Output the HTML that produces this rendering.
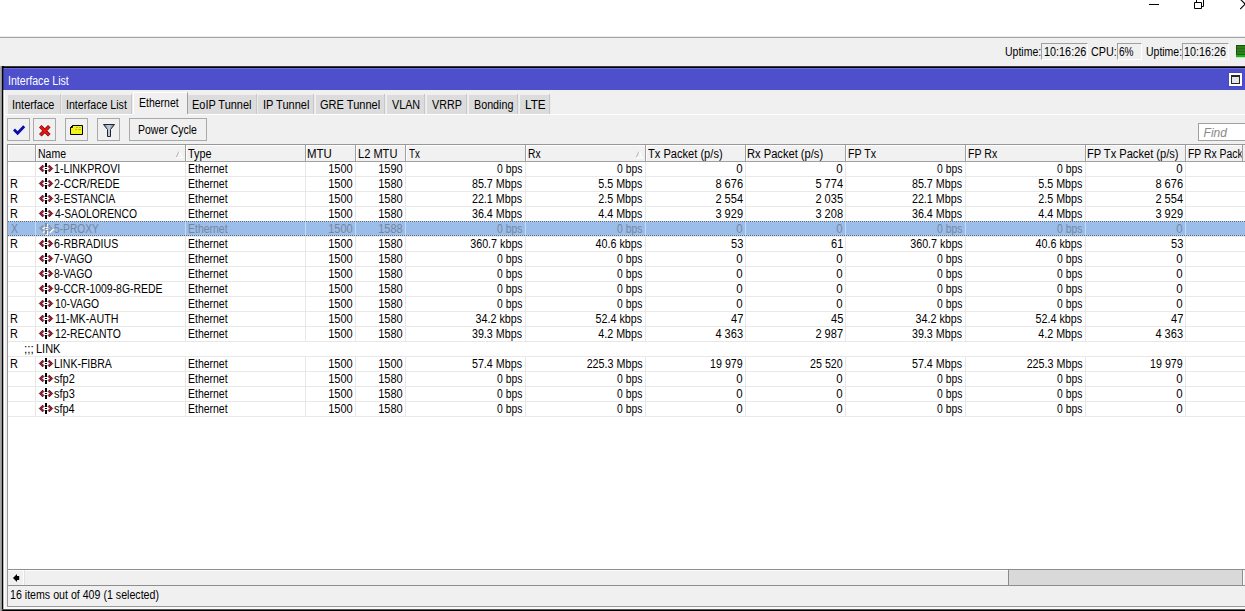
<!DOCTYPE html>
<html><head><meta charset="utf-8"><title>Interface List</title>
<style>
html,body{margin:0;padding:0;}
body{width:1245px;height:611px;overflow:hidden;background:#fff;position:relative;font-family:"Liberation Sans",sans-serif;font-size:12px;color:#000;}
#root{position:absolute;left:0;top:0;width:1245px;height:611px;overflow:hidden;}
#root div{position:absolute;}
.t{position:absolute;white-space:nowrap;line-height:14px;font-size:12px;}
svg{position:absolute;overflow:visible;}
</style></head>
<body><div id="root">
<div style="left:0px;top:0px;width:1245px;height:37px;background:#fff;"></div>
<div style="left:0px;top:36px;width:1245px;height:1px;background:#ececec;"></div>
<div style="left:0px;top:37px;width:1245px;height:1px;background:#a3a3a3;"></div>
<div style="left:0px;top:38px;width:1245px;height:28px;background:#f0f0f0;"></div>
<svg style="left:1140px;top:0" width="105" height="12" viewBox="1140 0 105 12"><path d="M1149 4.5H1159" stroke="#000" stroke-width="1" fill="none"/><path d="M1194.5 2.5h7v6h-7z M1196.5 2.5V-1 M1203.5 -1V6.5H1201.5" stroke="#000" stroke-width="1" fill="none"/><path d="M1240.6 -0.5L1246 4.9 M1240.2 9.1L1246 3.3" stroke="#000" stroke-width="1.1" fill="none"/></svg>
<span class="t" style="top:45.4px;transform:scaleX(0.8750);left:1004.78px;transform-origin:0 0;">Uptime:</span>
<div style="left:1041px;top:43px;width:47px;height:17px;background:#f0f0f0;box-sizing:border-box;border:1px solid;border-color:#a0a0a0 #fff #fff #a0a0a0;"></div>
<span class="t" style="top:45.4px;transform:scaleX(0.9039);left:1043.55px;transform-origin:0 0;">10:16:26</span>
<span class="t" style="top:45.4px;transform:scaleX(0.8984);left:1091.04px;transform-origin:0 0;">CPU:</span>
<div style="left:1117px;top:43px;width:25px;height:17px;background:#f0f0f0;box-sizing:border-box;border:1px solid;border-color:#a0a0a0 #fff #fff #a0a0a0;"></div>
<span class="t" style="top:45.4px;transform:scaleX(0.8398);left:1118.78px;transform-origin:0 0;">6%</span>
<span class="t" style="top:45.4px;transform:scaleX(0.8725);left:1145.88px;transform-origin:0 0;">Uptime:</span>
<div style="left:1182px;top:43px;width:47px;height:17px;background:#f0f0f0;box-sizing:border-box;border:1px solid;border-color:#a0a0a0 #fff #fff #a0a0a0;"></div>
<span class="t" style="top:45.4px;transform:scaleX(0.9017);left:1184.05px;transform-origin:0 0;">10:16:26</span>
<div style="left:1236px;top:45px;width:9px;height:12px;background:#2f7d1c;"></div>
<div style="left:1236px;top:45px;width:9px;height:1px;background:#1c4c10;"></div>
<div style="left:1236px;top:45px;width:1px;height:10px;background:#1c5010;"></div>
<div style="left:1237px;top:48px;width:8px;height:1px;background:#286c17;"></div>
<div style="left:1237px;top:51px;width:8px;height:1px;background:#286c17;"></div>
<div style="left:1236px;top:54px;width:9px;height:1px;background:#0b6c07;"></div>
<div style="left:1236px;top:55px;width:9px;height:2px;background:#2ba62b;"></div>
<div style="left:1236px;top:57px;width:9px;height:1px;background:#a8f0a8;"></div>
<div style="left:0px;top:66px;width:2px;height:545px;background:#aaaaaa;"></div>
<div style="left:2px;top:66px;width:1243px;height:1px;background:#3a3a3a;"></div>
<div style="left:2px;top:67px;width:1243px;height:1px;background:#000;"></div>
<div style="left:2px;top:66px;width:1px;height:545px;background:#000;"></div>
<div style="left:3px;top:66px;width:1px;height:545px;background:#b4b4b4;"></div>
<div style="left:3px;top:66px;width:1px;height:2px;background:#000;"></div>
<div style="left:1px;top:66px;width:1px;height:545px;background:#909090;"></div>
<div style="left:3px;top:68px;width:1px;height:22px;background:#34368c;"></div>
<div style="left:4px;top:68px;width:1241px;height:22px;background:#4d4fcb;"></div>
<div style="left:4px;top:68px;width:1241px;height:1px;background:#6a6cdc;"></div>
<span class="t" style="top:74px;color:#fff;transform:scaleX(0.8844);left:7.50px;transform-origin:0 0;">Interface List</span>
<div style="left:1228px;top:72px;width:15px;height:15px;background:#4749c4;"></div>
<div style="left:1229px;top:73px;width:13px;height:13px;background:#fff;"></div>
<div style="left:1231px;top:75px;width:9px;height:9px;background:#262626;"></div>
<div style="left:1232px;top:77px;width:7px;height:6px;background:#e6e6e6;"></div>
<div style="left:4px;top:90px;width:1241px;height:519px;background:#f0f0f0;"></div>
<div style="left:4px;top:90px;width:1px;height:519px;background:#fff;"></div>
<div style="left:4px;top:607px;width:1241px;height:2px;background:#fafafa;"></div>
<div style="left:2px;top:609px;width:1243px;height:1px;background:#555;"></div>
<div style="left:2px;top:610px;width:1243px;height:1px;background:#000;"></div>
<div style="left:5px;top:114px;width:1240px;height:1px;background:#fff;"></div>
<div style="left:8px;top:95px;width:52px;height:19px;background:#dcdcdc;"></div>
<div style="left:60px;top:94px;width:1px;height:20px;background:#c8c8c8;"></div>
<div style="left:61px;top:95px;width:1px;height:19px;background:#ebebeb;"></div>
<span class="t" style="top:97.7px;transform:scaleX(0.9089);left:12.28px;transform-origin:0 0;">Interface</span>
<div style="left:62px;top:95px;width:69px;height:19px;background:#dcdcdc;"></div>
<div style="left:131px;top:94px;width:1px;height:20px;background:#c8c8c8;"></div>
<div style="left:132px;top:95px;width:1px;height:19px;background:#ebebeb;"></div>
<span class="t" style="top:97.7px;transform:scaleX(0.8859);left:66.20px;transform-origin:0 0;">Interface List</span>
<div style="left:133px;top:92px;width:55px;height:22px;background:#f0f0f0;box-sizing:border-box;border-left:1px solid #fff;border-top:1px solid #fff;border-right:1px solid #a0a0a0;"></div>
<div style="left:133px;top:114px;width:55px;height:1px;background:#f0f0f0;"></div>
<span class="t" style="top:95.6px;transform:scaleX(0.8746);left:139.43px;transform-origin:0 0;">Ethernet</span>
<div style="left:188px;top:95px;width:68px;height:19px;background:#dcdcdc;"></div>
<div style="left:256px;top:94px;width:1px;height:20px;background:#c8c8c8;"></div>
<div style="left:257px;top:95px;width:1px;height:19px;background:#ebebeb;"></div>
<span class="t" style="top:97.7px;transform:scaleX(0.9120);left:191.59px;transform-origin:0 0;">EoIP Tunnel</span>
<div style="left:258px;top:95px;width:55px;height:19px;background:#dcdcdc;"></div>
<div style="left:313px;top:94px;width:1px;height:20px;background:#c8c8c8;"></div>
<div style="left:314px;top:95px;width:1px;height:19px;background:#ebebeb;"></div>
<span class="t" style="top:97.7px;transform:scaleX(0.9184);left:262.67px;transform-origin:0 0;">IP Tunnel</span>
<div style="left:316px;top:95px;width:68px;height:19px;background:#dcdcdc;"></div>
<div style="left:384px;top:94px;width:1px;height:20px;background:#c8c8c8;"></div>
<div style="left:385px;top:95px;width:1px;height:19px;background:#ebebeb;"></div>
<span class="t" style="top:97.7px;transform:scaleX(0.9212);left:320.22px;transform-origin:0 0;">GRE Tunnel</span>
<div style="left:387px;top:95px;width:37px;height:19px;background:#dcdcdc;"></div>
<div style="left:424px;top:94px;width:1px;height:20px;background:#c8c8c8;"></div>
<div style="left:425px;top:95px;width:1px;height:19px;background:#ebebeb;"></div>
<span class="t" style="top:97.7px;transform:scaleX(0.8973);left:392.44px;transform-origin:0 0;">VLAN</span>
<div style="left:427px;top:95px;width:39px;height:19px;background:#dcdcdc;"></div>
<div style="left:466px;top:94px;width:1px;height:20px;background:#c8c8c8;"></div>
<div style="left:467px;top:95px;width:1px;height:19px;background:#ebebeb;"></div>
<span class="t" style="top:97.7px;transform:scaleX(0.8950);left:432.44px;transform-origin:0 0;">VRRP</span>
<div style="left:469px;top:95px;width:48px;height:19px;background:#dcdcdc;"></div>
<div style="left:517px;top:94px;width:1px;height:20px;background:#c8c8c8;"></div>
<div style="left:518px;top:95px;width:1px;height:19px;background:#ebebeb;"></div>
<span class="t" style="top:97.7px;transform:scaleX(0.8947);left:473.81px;transform-origin:0 0;">Bonding</span>
<div style="left:520px;top:95px;width:29px;height:19px;background:#dcdcdc;"></div>
<div style="left:549px;top:94px;width:1px;height:20px;background:#c8c8c8;"></div>
<div style="left:550px;top:95px;width:1px;height:19px;background:#ebebeb;"></div>
<span class="t" style="top:97.7px;transform:scaleX(0.9783);left:524.82px;transform-origin:0 0;">LTE</span>
<div style="left:7px;top:118px;width:23px;height:23px;background:#f0f0f0;box-sizing:border-box;border:1px solid #a9a9a9;"></div>
<div style="left:33px;top:118px;width:23px;height:23px;background:#f0f0f0;box-sizing:border-box;border:1px solid #a9a9a9;"></div>
<div style="left:65px;top:118px;width:23px;height:23px;background:#f0f0f0;box-sizing:border-box;border:1px solid #a9a9a9;"></div>
<div style="left:97px;top:118px;width:23px;height:23px;background:#f0f0f0;box-sizing:border-box;border:1px solid #a9a9a9;"></div>
<div style="left:129px;top:118px;width:78px;height:23px;background:#f0f0f0;box-sizing:border-box;border:1px solid #a9a9a9;"></div>
<span class="t" style="top:123px;transform:scaleX(0.8752);left:137.82px;transform-origin:0 0;">Power Cycle</span>
<svg style="left:7px;top:118px" width="120" height="23" viewBox="7 118 120 23"><path d="M14 129.6L17.6 133.2L24.2 126.3" stroke="#0a0ab0" stroke-width="2.8" fill="none" stroke-linecap="butt"/><path d="M40.3 126.3L49.3 135.3M49.3 126.3L40.3 135.3" stroke="#7a0808" stroke-width="3.6" fill="none"/><path d="M40.6 126.6L49 135M49 126.6L40.6 135" stroke="#e81414" stroke-width="2.2" fill="none"/><path d="M72.5 125.5H82.5V134.5H70.5V127.5Z" fill="#f4f41c" stroke="#000" stroke-width="1"/><path d="M70.5 127.5H72.5V125.5" fill="none" stroke="#000" stroke-width="1"/><path d="M76 127.5h2M79 127.5h2M75 129.5h2M78 129.5h3" stroke="#b8b830" stroke-width="1"/><defs><linearGradient id="fg" x1="0" x2="1"><stop offset="0" stop-color="#6c7c98"/><stop offset="0.5" stop-color="#c8d0e0"/><stop offset="1" stop-color="#5a6884"/></linearGradient></defs><path d="M103.5 124.5H114.5L110.5 129.5V136.5H107.5V129.5Z" fill="url(#fg)" stroke="#20242c" stroke-width="1" stroke-linejoin="round"/></svg>
<div style="left:1198px;top:123px;width:50px;height:18px;background:#fff;box-sizing:border-box;border:1px solid #a0a0a0;"></div>
<span class="t" style="top:126.4px;color:#8a8a8a;transform:scaleX(1.0000);font-style:italic;left:1203.62px;transform-origin:0 0;">Find</span>
<div style="left:7px;top:144px;width:1238px;height:426px;background:#989898;"></div>
<div style="left:8px;top:145px;width:1237px;height:424px;background:#fff;"></div>
<div style="left:8px;top:145px;width:1234px;height:16px;background:#f1f1f1;"></div>
<div style="left:8px;top:145px;width:1234px;height:1px;background:#fff;"></div>
<div style="left:8px;top:161px;width:1237px;height:1px;background:#a0a0a0;"></div>
<div style="left:1242px;top:145px;width:1px;height:16px;background:#a0a0a0;"></div>
<div style="left:1243px;top:145px;width:2px;height:16px;background:#f0f0f0;"></div>
<div style="left:35px;top:145px;width:1px;height:16px;background:#a0a0a0;"></div>
<div style="left:36px;top:145px;width:1px;height:16px;background:#fff;"></div>
<div style="left:185px;top:145px;width:1px;height:16px;background:#a0a0a0;"></div>
<div style="left:186px;top:145px;width:1px;height:16px;background:#fff;"></div>
<div style="left:305px;top:145px;width:1px;height:16px;background:#a0a0a0;"></div>
<div style="left:306px;top:145px;width:1px;height:16px;background:#fff;"></div>
<div style="left:355px;top:145px;width:1px;height:16px;background:#a0a0a0;"></div>
<div style="left:356px;top:145px;width:1px;height:16px;background:#fff;"></div>
<div style="left:405px;top:145px;width:1px;height:16px;background:#a0a0a0;"></div>
<div style="left:406px;top:145px;width:1px;height:16px;background:#fff;"></div>
<div style="left:525px;top:145px;width:1px;height:16px;background:#a0a0a0;"></div>
<div style="left:526px;top:145px;width:1px;height:16px;background:#fff;"></div>
<div style="left:645px;top:145px;width:1px;height:16px;background:#a0a0a0;"></div>
<div style="left:646px;top:145px;width:1px;height:16px;background:#fff;"></div>
<div style="left:745px;top:145px;width:1px;height:16px;background:#a0a0a0;"></div>
<div style="left:746px;top:145px;width:1px;height:16px;background:#fff;"></div>
<div style="left:845px;top:145px;width:1px;height:16px;background:#a0a0a0;"></div>
<div style="left:846px;top:145px;width:1px;height:16px;background:#fff;"></div>
<div style="left:965px;top:145px;width:1px;height:16px;background:#a0a0a0;"></div>
<div style="left:966px;top:145px;width:1px;height:16px;background:#fff;"></div>
<div style="left:1085px;top:145px;width:1px;height:16px;background:#a0a0a0;"></div>
<div style="left:1086px;top:145px;width:1px;height:16px;background:#fff;"></div>
<div style="left:1185px;top:145px;width:1px;height:16px;background:#a0a0a0;"></div>
<div style="left:1186px;top:145px;width:1px;height:16px;background:#fff;"></div>
<div style="left:8px;top:145px;width:1px;height:16px;background:#fff;"></div>
<span class="t" style="top:147px;transform:scaleX(0.8739);left:37.73px;transform-origin:0 0;">Name</span>
<span class="t" style="top:147px;transform:scaleX(0.9012);left:188.37px;transform-origin:0 0;">Type</span>
<span class="t" style="top:147px;transform:scaleX(0.9517);left:307.45px;transform-origin:0 0;">MTU</span>
<span class="t" style="top:147px;transform:scaleX(0.9227);left:357.68px;transform-origin:0 0;">L2 MTU</span>
<span class="t" style="top:147px;transform:scaleX(0.8116);left:408.80px;transform-origin:0 0;">Tx</span>
<span class="t" style="top:147px;transform:scaleX(0.8590);left:527.89px;transform-origin:0 0;">Rx</span>
<span class="t" style="top:147px;transform:scaleX(0.9249);left:648.37px;transform-origin:0 0;">Tx Packet (p/s)</span>
<span class="t" style="top:147px;transform:scaleX(0.9283);left:747.47px;transform-origin:0 0;">Rx Packet (p/s)</span>
<span class="t" style="top:147px;transform:scaleX(0.8920);left:847.71px;transform-origin:0 0;">FP Tx</span>
<span class="t" style="top:147px;transform:scaleX(0.8813);left:967.52px;transform-origin:0 0;">FP Rx</span>
<span class="t" style="top:147px;transform:scaleX(0.9250);left:1087.17px;transform-origin:0 0;">FP Tx Packet (p/s)</span>
<span class="t" style="top:147px;transform:scaleX(0.8658);left:1187.73px;transform-origin:0 0;width:62.0px;overflow:hidden;">FP Rx Packet (p/s)</span>
<svg style="left:175.2px;top:150.6px" width="9" height="8" viewBox="0 0 9 8"><path d="M1 6.8L4 0.3" stroke="#b4b4b4" stroke-width="1" fill="none"/><path d="M4 0.3L7.4 6.8H0.6" stroke="#fff" stroke-width="1.1" fill="none"/></svg>
<svg style="left:635px;top:150.6px" width="9" height="8" viewBox="0 0 9 8"><path d="M1 6.8L4 0.3" stroke="#b4b4b4" stroke-width="1" fill="none"/><path d="M4 0.3L7.4 6.8H0.6" stroke="#fff" stroke-width="1.1" fill="none"/></svg>
<div style="left:8px;top:176px;width:1237px;height:1px;background:#e8e8e8;"></div>
<div style="left:35px;top:162px;width:1px;height:14px;background:#e8e8e8;"></div>
<div style="left:185px;top:162px;width:1px;height:14px;background:#e8e8e8;"></div>
<div style="left:305px;top:162px;width:1px;height:14px;background:#e8e8e8;"></div>
<div style="left:355px;top:162px;width:1px;height:14px;background:#e8e8e8;"></div>
<div style="left:405px;top:162px;width:1px;height:14px;background:#e8e8e8;"></div>
<div style="left:525px;top:162px;width:1px;height:14px;background:#e8e8e8;"></div>
<div style="left:645px;top:162px;width:1px;height:14px;background:#e8e8e8;"></div>
<div style="left:745px;top:162px;width:1px;height:14px;background:#e8e8e8;"></div>
<div style="left:845px;top:162px;width:1px;height:14px;background:#e8e8e8;"></div>
<div style="left:965px;top:162px;width:1px;height:14px;background:#e8e8e8;"></div>
<div style="left:1085px;top:162px;width:1px;height:14px;background:#e8e8e8;"></div>
<div style="left:1185px;top:162px;width:1px;height:14px;background:#e8e8e8;"></div>
<svg style="left:39px;top:163px" width="15" height="12" viewBox="39 163 15 12"><g><path d="M39.3 168.5L42.6 165.2L43.9 166.5L41.9 168.5L43.9 170.5L42.6 171.8Z" fill="#ac1c3a" stroke="#4a0814" stroke-width="0.9"/><path d="M52.7 168.5L49.4 165.2L48.1 166.5L50.1 168.5L48.1 170.5L49.4 171.8Z" fill="#ac1c3a" stroke="#4a0814" stroke-width="0.9"/><path d="M45 163h2v4h-2zM45 168h2v1h-2zM45 170h2v4h-2z" fill="#000"/></g></svg>
<span class="t" style="top:162px;transform:scaleX(0.8874);left:54.07px;transform-origin:0 0;">1-LINKPROVI</span>
<span class="t" style="top:162px;transform:scaleX(0.8723);left:187.53px;transform-origin:0 0;">Ethernet</span>
<span class="t" style="top:162px;transform:scaleX(0.9200);right:892.03px;transform-origin:100% 0;">1500</span>
<span class="t" style="top:162px;transform:scaleX(0.9200);right:842.03px;transform-origin:100% 0;">1590</span>
<span class="t" style="top:162px;transform:scaleX(0.8630);right:722.54px;transform-origin:100% 0;">0 bps</span>
<span class="t" style="top:162px;transform:scaleX(0.8630);right:602.54px;transform-origin:100% 0;">0 bps</span>
<span class="t" style="top:162px;transform:scaleX(0.9550);right:502.04px;transform-origin:100% 0;">0</span>
<span class="t" style="top:162px;transform:scaleX(0.9550);right:402.04px;transform-origin:100% 0;">0</span>
<span class="t" style="top:162px;transform:scaleX(0.8630);right:282.54px;transform-origin:100% 0;">0 bps</span>
<span class="t" style="top:162px;transform:scaleX(0.8630);right:162.54px;transform-origin:100% 0;">0 bps</span>
<span class="t" style="top:162px;transform:scaleX(0.9550);right:62.04px;transform-origin:100% 0;">0</span>
<div style="left:8px;top:191px;width:1237px;height:1px;background:#e8e8e8;"></div>
<div style="left:35px;top:177px;width:1px;height:14px;background:#e8e8e8;"></div>
<div style="left:185px;top:177px;width:1px;height:14px;background:#e8e8e8;"></div>
<div style="left:305px;top:177px;width:1px;height:14px;background:#e8e8e8;"></div>
<div style="left:355px;top:177px;width:1px;height:14px;background:#e8e8e8;"></div>
<div style="left:405px;top:177px;width:1px;height:14px;background:#e8e8e8;"></div>
<div style="left:525px;top:177px;width:1px;height:14px;background:#e8e8e8;"></div>
<div style="left:645px;top:177px;width:1px;height:14px;background:#e8e8e8;"></div>
<div style="left:745px;top:177px;width:1px;height:14px;background:#e8e8e8;"></div>
<div style="left:845px;top:177px;width:1px;height:14px;background:#e8e8e8;"></div>
<div style="left:965px;top:177px;width:1px;height:14px;background:#e8e8e8;"></div>
<div style="left:1085px;top:177px;width:1px;height:14px;background:#e8e8e8;"></div>
<div style="left:1185px;top:177px;width:1px;height:14px;background:#e8e8e8;"></div>
<span class="t" style="top:177px;transform:scaleX(0.9123);left:10.09px;transform-origin:0 0;">R</span>
<svg style="left:39px;top:178px" width="15" height="12" viewBox="39 163 15 12"><g><path d="M39.3 168.5L42.6 165.2L43.9 166.5L41.9 168.5L43.9 170.5L42.6 171.8Z" fill="#ac1c3a" stroke="#4a0814" stroke-width="0.9"/><path d="M52.7 168.5L49.4 165.2L48.1 166.5L50.1 168.5L48.1 170.5L49.4 171.8Z" fill="#ac1c3a" stroke="#4a0814" stroke-width="0.9"/><path d="M45 163h2v4h-2zM45 168h2v1h-2zM45 170h2v4h-2z" fill="#000"/></g></svg>
<span class="t" style="top:177px;transform:scaleX(0.8963);left:54.24px;transform-origin:0 0;">2-CCR/REDE</span>
<span class="t" style="top:177px;transform:scaleX(0.8723);left:187.53px;transform-origin:0 0;">Ethernet</span>
<span class="t" style="top:177px;transform:scaleX(0.9200);right:892.03px;transform-origin:100% 0;">1500</span>
<span class="t" style="top:177px;transform:scaleX(0.9200);right:842.03px;transform-origin:100% 0;">1580</span>
<span class="t" style="top:177px;transform:scaleX(0.8940);right:722.54px;transform-origin:100% 0;">85.7 Mbps</span>
<span class="t" style="top:177px;transform:scaleX(0.8940);right:602.52px;transform-origin:100% 0;">5.5 Mbps</span>
<span class="t" style="top:177px;transform:scaleX(0.9200);right:502.01px;transform-origin:100% 0;">8 676</span>
<span class="t" style="top:177px;transform:scaleX(0.9200);right:402.19px;transform-origin:100% 0;">5 774</span>
<span class="t" style="top:177px;transform:scaleX(0.8940);right:282.54px;transform-origin:100% 0;">85.7 Mbps</span>
<span class="t" style="top:177px;transform:scaleX(0.8940);right:162.52px;transform-origin:100% 0;">5.5 Mbps</span>
<span class="t" style="top:177px;transform:scaleX(0.9200);right:62.01px;transform-origin:100% 0;">8 676</span>
<div style="left:8px;top:206px;width:1237px;height:1px;background:#e8e8e8;"></div>
<div style="left:35px;top:192px;width:1px;height:14px;background:#e8e8e8;"></div>
<div style="left:185px;top:192px;width:1px;height:14px;background:#e8e8e8;"></div>
<div style="left:305px;top:192px;width:1px;height:14px;background:#e8e8e8;"></div>
<div style="left:355px;top:192px;width:1px;height:14px;background:#e8e8e8;"></div>
<div style="left:405px;top:192px;width:1px;height:14px;background:#e8e8e8;"></div>
<div style="left:525px;top:192px;width:1px;height:14px;background:#e8e8e8;"></div>
<div style="left:645px;top:192px;width:1px;height:14px;background:#e8e8e8;"></div>
<div style="left:745px;top:192px;width:1px;height:14px;background:#e8e8e8;"></div>
<div style="left:845px;top:192px;width:1px;height:14px;background:#e8e8e8;"></div>
<div style="left:965px;top:192px;width:1px;height:14px;background:#e8e8e8;"></div>
<div style="left:1085px;top:192px;width:1px;height:14px;background:#e8e8e8;"></div>
<div style="left:1185px;top:192px;width:1px;height:14px;background:#e8e8e8;"></div>
<span class="t" style="top:192px;transform:scaleX(0.9123);left:10.09px;transform-origin:0 0;">R</span>
<svg style="left:39px;top:193px" width="15" height="12" viewBox="39 163 15 12"><g><path d="M39.3 168.5L42.6 165.2L43.9 166.5L41.9 168.5L43.9 170.5L42.6 171.8Z" fill="#ac1c3a" stroke="#4a0814" stroke-width="0.9"/><path d="M52.7 168.5L49.4 165.2L48.1 166.5L50.1 168.5L48.1 170.5L49.4 171.8Z" fill="#ac1c3a" stroke="#4a0814" stroke-width="0.9"/><path d="M45 163h2v4h-2zM45 168h2v1h-2zM45 170h2v4h-2z" fill="#000"/></g></svg>
<span class="t" style="top:192px;transform:scaleX(0.8793);left:54.42px;transform-origin:0 0;">3-ESTANCIA</span>
<span class="t" style="top:192px;transform:scaleX(0.8723);left:187.53px;transform-origin:0 0;">Ethernet</span>
<span class="t" style="top:192px;transform:scaleX(0.9200);right:892.03px;transform-origin:100% 0;">1500</span>
<span class="t" style="top:192px;transform:scaleX(0.9200);right:842.03px;transform-origin:100% 0;">1580</span>
<span class="t" style="top:192px;transform:scaleX(0.8940);right:722.54px;transform-origin:100% 0;">22.1 Mbps</span>
<span class="t" style="top:192px;transform:scaleX(0.8940);right:602.52px;transform-origin:100% 0;">2.5 Mbps</span>
<span class="t" style="top:192px;transform:scaleX(0.9200);right:502.19px;transform-origin:100% 0;">2 554</span>
<span class="t" style="top:192px;transform:scaleX(0.9200);right:402.07px;transform-origin:100% 0;">2 035</span>
<span class="t" style="top:192px;transform:scaleX(0.8940);right:282.54px;transform-origin:100% 0;">22.1 Mbps</span>
<span class="t" style="top:192px;transform:scaleX(0.8940);right:162.52px;transform-origin:100% 0;">2.5 Mbps</span>
<span class="t" style="top:192px;transform:scaleX(0.9200);right:62.19px;transform-origin:100% 0;">2 554</span>
<div style="left:8px;top:221px;width:1237px;height:1px;background:#e8e8e8;"></div>
<div style="left:35px;top:207px;width:1px;height:14px;background:#e8e8e8;"></div>
<div style="left:185px;top:207px;width:1px;height:14px;background:#e8e8e8;"></div>
<div style="left:305px;top:207px;width:1px;height:14px;background:#e8e8e8;"></div>
<div style="left:355px;top:207px;width:1px;height:14px;background:#e8e8e8;"></div>
<div style="left:405px;top:207px;width:1px;height:14px;background:#e8e8e8;"></div>
<div style="left:525px;top:207px;width:1px;height:14px;background:#e8e8e8;"></div>
<div style="left:645px;top:207px;width:1px;height:14px;background:#e8e8e8;"></div>
<div style="left:745px;top:207px;width:1px;height:14px;background:#e8e8e8;"></div>
<div style="left:845px;top:207px;width:1px;height:14px;background:#e8e8e8;"></div>
<div style="left:965px;top:207px;width:1px;height:14px;background:#e8e8e8;"></div>
<div style="left:1085px;top:207px;width:1px;height:14px;background:#e8e8e8;"></div>
<div style="left:1185px;top:207px;width:1px;height:14px;background:#e8e8e8;"></div>
<span class="t" style="top:207px;transform:scaleX(0.9123);left:10.09px;transform-origin:0 0;">R</span>
<svg style="left:39px;top:208px" width="15" height="12" viewBox="39 163 15 12"><g><path d="M39.3 168.5L42.6 165.2L43.9 166.5L41.9 168.5L43.9 170.5L42.6 171.8Z" fill="#ac1c3a" stroke="#4a0814" stroke-width="0.9"/><path d="M52.7 168.5L49.4 165.2L48.1 166.5L50.1 168.5L48.1 170.5L49.4 171.8Z" fill="#ac1c3a" stroke="#4a0814" stroke-width="0.9"/><path d="M45 163h2v4h-2zM45 168h2v1h-2zM45 170h2v4h-2z" fill="#000"/></g></svg>
<span class="t" style="top:207px;transform:scaleX(0.8593);left:54.59px;transform-origin:0 0;">4-SAOLORENCO</span>
<span class="t" style="top:207px;transform:scaleX(0.8723);left:187.53px;transform-origin:0 0;">Ethernet</span>
<span class="t" style="top:207px;transform:scaleX(0.9200);right:892.03px;transform-origin:100% 0;">1500</span>
<span class="t" style="top:207px;transform:scaleX(0.9200);right:842.03px;transform-origin:100% 0;">1580</span>
<span class="t" style="top:207px;transform:scaleX(0.8940);right:722.54px;transform-origin:100% 0;">36.4 Mbps</span>
<span class="t" style="top:207px;transform:scaleX(0.8940);right:602.52px;transform-origin:100% 0;">4.4 Mbps</span>
<span class="t" style="top:207px;transform:scaleX(0.9200);right:502.01px;transform-origin:100% 0;">3 929</span>
<span class="t" style="top:207px;transform:scaleX(0.9200);right:402.07px;transform-origin:100% 0;">3 208</span>
<span class="t" style="top:207px;transform:scaleX(0.8940);right:282.54px;transform-origin:100% 0;">36.4 Mbps</span>
<span class="t" style="top:207px;transform:scaleX(0.8940);right:162.52px;transform-origin:100% 0;">4.4 Mbps</span>
<span class="t" style="top:207px;transform:scaleX(0.9200);right:62.01px;transform-origin:100% 0;">3 929</span>
<div style="left:8px;top:236px;width:1237px;height:1px;background:#e8e8e8;"></div>
<div style="left:8px;top:221px;width:1237px;height:15px;background:#9abde9;"></div>
<div style="left:8px;top:221px;width:1237px;height:1px;background:transparent;background-image:repeating-linear-gradient(90deg,#606a76 0 1px,#bdcfe6 1px 2px);"></div>
<div style="left:8px;top:235px;width:1237px;height:1px;background:transparent;background-image:repeating-linear-gradient(90deg,#606a76 0 1px,#bdcfe6 1px 2px);"></div>
<div style="left:35px;top:221px;width:1px;height:15px;background:#c4daf2;"></div>
<div style="left:185px;top:221px;width:1px;height:15px;background:#c4daf2;"></div>
<div style="left:305px;top:221px;width:1px;height:15px;background:#c4daf2;"></div>
<div style="left:355px;top:221px;width:1px;height:15px;background:#c4daf2;"></div>
<div style="left:405px;top:221px;width:1px;height:15px;background:#c4daf2;"></div>
<div style="left:525px;top:221px;width:1px;height:15px;background:#c4daf2;"></div>
<div style="left:645px;top:221px;width:1px;height:15px;background:#c4daf2;"></div>
<div style="left:745px;top:221px;width:1px;height:15px;background:#c4daf2;"></div>
<div style="left:845px;top:221px;width:1px;height:15px;background:#c4daf2;"></div>
<div style="left:965px;top:221px;width:1px;height:15px;background:#c4daf2;"></div>
<div style="left:1085px;top:221px;width:1px;height:15px;background:#c4daf2;"></div>
<div style="left:1185px;top:221px;width:1px;height:15px;background:#c4daf2;"></div>
<span class="t" style="top:222px;color:#76869e;transform:scaleX(0.8739);left:10.73px;transform-origin:0 0;">X</span>
<svg style="left:39px;top:223px" width="15" height="12" viewBox="39 163 15 12"><g transform="translate(1 1)"><path d="M39.3 168.5L42.6 165.2L43.9 166.5L41.9 168.5L43.9 170.5L42.6 171.8Z" fill="#fff" stroke="#fff" stroke-width="0.9"/><path d="M52.7 168.5L49.4 165.2L48.1 166.5L50.1 168.5L48.1 170.5L49.4 171.8Z" fill="#fff" stroke="#fff" stroke-width="0.9"/><path d="M45 163h2v4h-2zM45 168h2v1h-2zM45 170h2v4h-2z" fill="#fff"/></g><g><path d="M39.3 168.5L42.6 165.2L43.9 166.5L41.9 168.5L43.9 170.5L42.6 171.8Z" fill="#8f9cae" stroke="#8796aa" stroke-width="0.9"/><path d="M52.7 168.5L49.4 165.2L48.1 166.5L50.1 168.5L48.1 170.5L49.4 171.8Z" fill="#8f9cae" stroke="#8796aa" stroke-width="0.9"/><path d="M45 163h2v4h-2zM45 168h2v1h-2zM45 170h2v4h-2z" fill="#7f8ea6"/></g></svg>
<span class="t" style="top:222px;color:#76869e;transform:scaleX(0.8510);left:54.37px;transform-origin:0 0;">5-PROXY</span>
<span class="t" style="top:222px;color:#76869e;transform:scaleX(0.8723);left:187.53px;transform-origin:0 0;">Ethernet</span>
<span class="t" style="top:222px;color:#76869e;transform:scaleX(0.9200);right:892.03px;transform-origin:100% 0;">1500</span>
<span class="t" style="top:222px;color:#76869e;transform:scaleX(0.9200);right:842.03px;transform-origin:100% 0;">1588</span>
<span class="t" style="top:222px;color:#76869e;transform:scaleX(0.8630);right:722.54px;transform-origin:100% 0;">0 bps</span>
<span class="t" style="top:222px;color:#76869e;transform:scaleX(0.8630);right:602.54px;transform-origin:100% 0;">0 bps</span>
<span class="t" style="top:222px;color:#76869e;transform:scaleX(0.9550);right:502.04px;transform-origin:100% 0;">0</span>
<span class="t" style="top:222px;color:#76869e;transform:scaleX(0.9550);right:402.04px;transform-origin:100% 0;">0</span>
<span class="t" style="top:222px;color:#76869e;transform:scaleX(0.8630);right:282.54px;transform-origin:100% 0;">0 bps</span>
<span class="t" style="top:222px;color:#76869e;transform:scaleX(0.8630);right:162.54px;transform-origin:100% 0;">0 bps</span>
<span class="t" style="top:222px;color:#76869e;transform:scaleX(0.9550);right:62.04px;transform-origin:100% 0;">0</span>
<div style="left:8px;top:251px;width:1237px;height:1px;background:#e8e8e8;"></div>
<div style="left:35px;top:237px;width:1px;height:14px;background:#e8e8e8;"></div>
<div style="left:185px;top:237px;width:1px;height:14px;background:#e8e8e8;"></div>
<div style="left:305px;top:237px;width:1px;height:14px;background:#e8e8e8;"></div>
<div style="left:355px;top:237px;width:1px;height:14px;background:#e8e8e8;"></div>
<div style="left:405px;top:237px;width:1px;height:14px;background:#e8e8e8;"></div>
<div style="left:525px;top:237px;width:1px;height:14px;background:#e8e8e8;"></div>
<div style="left:645px;top:237px;width:1px;height:14px;background:#e8e8e8;"></div>
<div style="left:745px;top:237px;width:1px;height:14px;background:#e8e8e8;"></div>
<div style="left:845px;top:237px;width:1px;height:14px;background:#e8e8e8;"></div>
<div style="left:965px;top:237px;width:1px;height:14px;background:#e8e8e8;"></div>
<div style="left:1085px;top:237px;width:1px;height:14px;background:#e8e8e8;"></div>
<div style="left:1185px;top:237px;width:1px;height:14px;background:#e8e8e8;"></div>
<span class="t" style="top:237px;transform:scaleX(0.9123);left:10.09px;transform-origin:0 0;">R</span>
<svg style="left:39px;top:238px" width="15" height="12" viewBox="39 163 15 12"><g><path d="M39.3 168.5L42.6 165.2L43.9 166.5L41.9 168.5L43.9 170.5L42.6 171.8Z" fill="#ac1c3a" stroke="#4a0814" stroke-width="0.9"/><path d="M52.7 168.5L49.4 165.2L48.1 166.5L50.1 168.5L48.1 170.5L49.4 171.8Z" fill="#ac1c3a" stroke="#4a0814" stroke-width="0.9"/><path d="M45 163h2v4h-2zM45 168h2v1h-2zM45 170h2v4h-2z" fill="#000"/></g></svg>
<span class="t" style="top:237px;transform:scaleX(0.8839);left:54.25px;transform-origin:0 0;">6-RBRADIUS</span>
<span class="t" style="top:237px;transform:scaleX(0.8723);left:187.53px;transform-origin:0 0;">Ethernet</span>
<span class="t" style="top:237px;transform:scaleX(0.9200);right:892.03px;transform-origin:100% 0;">1500</span>
<span class="t" style="top:237px;transform:scaleX(0.9200);right:842.03px;transform-origin:100% 0;">1580</span>
<span class="t" style="top:237px;transform:scaleX(0.8940);right:722.49px;transform-origin:100% 0;">360.7 kbps</span>
<span class="t" style="top:237px;transform:scaleX(0.8940);right:602.53px;transform-origin:100% 0;">40.6 kbps</span>
<span class="t" style="top:237px;transform:scaleX(0.9200);right:502.01px;transform-origin:100% 0;">53</span>
<span class="t" style="top:237px;transform:scaleX(0.9200);right:402.01px;transform-origin:100% 0;">61</span>
<span class="t" style="top:237px;transform:scaleX(0.8940);right:282.49px;transform-origin:100% 0;">360.7 kbps</span>
<span class="t" style="top:237px;transform:scaleX(0.8940);right:162.53px;transform-origin:100% 0;">40.6 kbps</span>
<span class="t" style="top:237px;transform:scaleX(0.9200);right:62.01px;transform-origin:100% 0;">53</span>
<div style="left:8px;top:266px;width:1237px;height:1px;background:#e8e8e8;"></div>
<div style="left:35px;top:252px;width:1px;height:14px;background:#e8e8e8;"></div>
<div style="left:185px;top:252px;width:1px;height:14px;background:#e8e8e8;"></div>
<div style="left:305px;top:252px;width:1px;height:14px;background:#e8e8e8;"></div>
<div style="left:355px;top:252px;width:1px;height:14px;background:#e8e8e8;"></div>
<div style="left:405px;top:252px;width:1px;height:14px;background:#e8e8e8;"></div>
<div style="left:525px;top:252px;width:1px;height:14px;background:#e8e8e8;"></div>
<div style="left:645px;top:252px;width:1px;height:14px;background:#e8e8e8;"></div>
<div style="left:745px;top:252px;width:1px;height:14px;background:#e8e8e8;"></div>
<div style="left:845px;top:252px;width:1px;height:14px;background:#e8e8e8;"></div>
<div style="left:965px;top:252px;width:1px;height:14px;background:#e8e8e8;"></div>
<div style="left:1085px;top:252px;width:1px;height:14px;background:#e8e8e8;"></div>
<div style="left:1185px;top:252px;width:1px;height:14px;background:#e8e8e8;"></div>
<svg style="left:39px;top:253px" width="15" height="12" viewBox="39 163 15 12"><g><path d="M39.3 168.5L42.6 165.2L43.9 166.5L41.9 168.5L43.9 170.5L42.6 171.8Z" fill="#ac1c3a" stroke="#4a0814" stroke-width="0.9"/><path d="M52.7 168.5L49.4 165.2L48.1 166.5L50.1 168.5L48.1 170.5L49.4 171.8Z" fill="#ac1c3a" stroke="#4a0814" stroke-width="0.9"/><path d="M45 163h2v4h-2zM45 168h2v1h-2zM45 170h2v4h-2z" fill="#000"/></g></svg>
<span class="t" style="top:252px;transform:scaleX(0.8647);left:54.26px;transform-origin:0 0;">7-VAGO</span>
<span class="t" style="top:252px;transform:scaleX(0.8723);left:187.53px;transform-origin:0 0;">Ethernet</span>
<span class="t" style="top:252px;transform:scaleX(0.9200);right:892.03px;transform-origin:100% 0;">1500</span>
<span class="t" style="top:252px;transform:scaleX(0.9200);right:842.03px;transform-origin:100% 0;">1580</span>
<span class="t" style="top:252px;transform:scaleX(0.8630);right:722.54px;transform-origin:100% 0;">0 bps</span>
<span class="t" style="top:252px;transform:scaleX(0.8630);right:602.54px;transform-origin:100% 0;">0 bps</span>
<span class="t" style="top:252px;transform:scaleX(0.9550);right:502.04px;transform-origin:100% 0;">0</span>
<span class="t" style="top:252px;transform:scaleX(0.9550);right:402.04px;transform-origin:100% 0;">0</span>
<span class="t" style="top:252px;transform:scaleX(0.8630);right:282.54px;transform-origin:100% 0;">0 bps</span>
<span class="t" style="top:252px;transform:scaleX(0.8630);right:162.54px;transform-origin:100% 0;">0 bps</span>
<span class="t" style="top:252px;transform:scaleX(0.9550);right:62.04px;transform-origin:100% 0;">0</span>
<div style="left:8px;top:281px;width:1237px;height:1px;background:#e8e8e8;"></div>
<div style="left:35px;top:267px;width:1px;height:14px;background:#e8e8e8;"></div>
<div style="left:185px;top:267px;width:1px;height:14px;background:#e8e8e8;"></div>
<div style="left:305px;top:267px;width:1px;height:14px;background:#e8e8e8;"></div>
<div style="left:355px;top:267px;width:1px;height:14px;background:#e8e8e8;"></div>
<div style="left:405px;top:267px;width:1px;height:14px;background:#e8e8e8;"></div>
<div style="left:525px;top:267px;width:1px;height:14px;background:#e8e8e8;"></div>
<div style="left:645px;top:267px;width:1px;height:14px;background:#e8e8e8;"></div>
<div style="left:745px;top:267px;width:1px;height:14px;background:#e8e8e8;"></div>
<div style="left:845px;top:267px;width:1px;height:14px;background:#e8e8e8;"></div>
<div style="left:965px;top:267px;width:1px;height:14px;background:#e8e8e8;"></div>
<div style="left:1085px;top:267px;width:1px;height:14px;background:#e8e8e8;"></div>
<div style="left:1185px;top:267px;width:1px;height:14px;background:#e8e8e8;"></div>
<svg style="left:39px;top:268px" width="15" height="12" viewBox="39 163 15 12"><g><path d="M39.3 168.5L42.6 165.2L43.9 166.5L41.9 168.5L43.9 170.5L42.6 171.8Z" fill="#ac1c3a" stroke="#4a0814" stroke-width="0.9"/><path d="M52.7 168.5L49.4 165.2L48.1 166.5L50.1 168.5L48.1 170.5L49.4 171.8Z" fill="#ac1c3a" stroke="#4a0814" stroke-width="0.9"/><path d="M45 163h2v4h-2zM45 168h2v1h-2zM45 170h2v4h-2z" fill="#000"/></g></svg>
<span class="t" style="top:267px;transform:scaleX(0.8622);left:54.37px;transform-origin:0 0;">8-VAGO</span>
<span class="t" style="top:267px;transform:scaleX(0.8723);left:187.53px;transform-origin:0 0;">Ethernet</span>
<span class="t" style="top:267px;transform:scaleX(0.9200);right:892.03px;transform-origin:100% 0;">1500</span>
<span class="t" style="top:267px;transform:scaleX(0.9200);right:842.03px;transform-origin:100% 0;">1580</span>
<span class="t" style="top:267px;transform:scaleX(0.8630);right:722.54px;transform-origin:100% 0;">0 bps</span>
<span class="t" style="top:267px;transform:scaleX(0.8630);right:602.54px;transform-origin:100% 0;">0 bps</span>
<span class="t" style="top:267px;transform:scaleX(0.9550);right:502.04px;transform-origin:100% 0;">0</span>
<span class="t" style="top:267px;transform:scaleX(0.9550);right:402.04px;transform-origin:100% 0;">0</span>
<span class="t" style="top:267px;transform:scaleX(0.8630);right:282.54px;transform-origin:100% 0;">0 bps</span>
<span class="t" style="top:267px;transform:scaleX(0.8630);right:162.54px;transform-origin:100% 0;">0 bps</span>
<span class="t" style="top:267px;transform:scaleX(0.9550);right:62.04px;transform-origin:100% 0;">0</span>
<div style="left:8px;top:296px;width:1237px;height:1px;background:#e8e8e8;"></div>
<div style="left:35px;top:282px;width:1px;height:14px;background:#e8e8e8;"></div>
<div style="left:185px;top:282px;width:1px;height:14px;background:#e8e8e8;"></div>
<div style="left:305px;top:282px;width:1px;height:14px;background:#e8e8e8;"></div>
<div style="left:355px;top:282px;width:1px;height:14px;background:#e8e8e8;"></div>
<div style="left:405px;top:282px;width:1px;height:14px;background:#e8e8e8;"></div>
<div style="left:525px;top:282px;width:1px;height:14px;background:#e8e8e8;"></div>
<div style="left:645px;top:282px;width:1px;height:14px;background:#e8e8e8;"></div>
<div style="left:745px;top:282px;width:1px;height:14px;background:#e8e8e8;"></div>
<div style="left:845px;top:282px;width:1px;height:14px;background:#e8e8e8;"></div>
<div style="left:965px;top:282px;width:1px;height:14px;background:#e8e8e8;"></div>
<div style="left:1085px;top:282px;width:1px;height:14px;background:#e8e8e8;"></div>
<div style="left:1185px;top:282px;width:1px;height:14px;background:#e8e8e8;"></div>
<svg style="left:39px;top:283px" width="15" height="12" viewBox="39 163 15 12"><g><path d="M39.3 168.5L42.6 165.2L43.9 166.5L41.9 168.5L43.9 170.5L42.6 171.8Z" fill="#ac1c3a" stroke="#4a0814" stroke-width="0.9"/><path d="M52.7 168.5L49.4 165.2L48.1 166.5L50.1 168.5L48.1 170.5L49.4 171.8Z" fill="#ac1c3a" stroke="#4a0814" stroke-width="0.9"/><path d="M45 163h2v4h-2zM45 168h2v1h-2zM45 170h2v4h-2z" fill="#000"/></g></svg>
<span class="t" style="top:282px;transform:scaleX(0.8704);left:53.51px;transform-origin:0 0;">9-CCR-1009-8G-REDE</span>
<span class="t" style="top:282px;transform:scaleX(0.8723);left:187.53px;transform-origin:0 0;">Ethernet</span>
<span class="t" style="top:282px;transform:scaleX(0.9200);right:892.03px;transform-origin:100% 0;">1500</span>
<span class="t" style="top:282px;transform:scaleX(0.9200);right:842.03px;transform-origin:100% 0;">1580</span>
<span class="t" style="top:282px;transform:scaleX(0.8630);right:722.54px;transform-origin:100% 0;">0 bps</span>
<span class="t" style="top:282px;transform:scaleX(0.8630);right:602.54px;transform-origin:100% 0;">0 bps</span>
<span class="t" style="top:282px;transform:scaleX(0.9550);right:502.04px;transform-origin:100% 0;">0</span>
<span class="t" style="top:282px;transform:scaleX(0.9550);right:402.04px;transform-origin:100% 0;">0</span>
<span class="t" style="top:282px;transform:scaleX(0.8630);right:282.54px;transform-origin:100% 0;">0 bps</span>
<span class="t" style="top:282px;transform:scaleX(0.8630);right:162.54px;transform-origin:100% 0;">0 bps</span>
<span class="t" style="top:282px;transform:scaleX(0.9550);right:62.04px;transform-origin:100% 0;">0</span>
<div style="left:8px;top:311px;width:1237px;height:1px;background:#e8e8e8;"></div>
<div style="left:35px;top:297px;width:1px;height:14px;background:#e8e8e8;"></div>
<div style="left:185px;top:297px;width:1px;height:14px;background:#e8e8e8;"></div>
<div style="left:305px;top:297px;width:1px;height:14px;background:#e8e8e8;"></div>
<div style="left:355px;top:297px;width:1px;height:14px;background:#e8e8e8;"></div>
<div style="left:405px;top:297px;width:1px;height:14px;background:#e8e8e8;"></div>
<div style="left:525px;top:297px;width:1px;height:14px;background:#e8e8e8;"></div>
<div style="left:645px;top:297px;width:1px;height:14px;background:#e8e8e8;"></div>
<div style="left:745px;top:297px;width:1px;height:14px;background:#e8e8e8;"></div>
<div style="left:845px;top:297px;width:1px;height:14px;background:#e8e8e8;"></div>
<div style="left:965px;top:297px;width:1px;height:14px;background:#e8e8e8;"></div>
<div style="left:1085px;top:297px;width:1px;height:14px;background:#e8e8e8;"></div>
<div style="left:1185px;top:297px;width:1px;height:14px;background:#e8e8e8;"></div>
<svg style="left:39px;top:298px" width="15" height="12" viewBox="39 163 15 12"><g><path d="M39.3 168.5L42.6 165.2L43.9 166.5L41.9 168.5L43.9 170.5L42.6 171.8Z" fill="#ac1c3a" stroke="#4a0814" stroke-width="0.9"/><path d="M52.7 168.5L49.4 165.2L48.1 166.5L50.1 168.5L48.1 170.5L49.4 171.8Z" fill="#ac1c3a" stroke="#4a0814" stroke-width="0.9"/><path d="M45 163h2v4h-2zM45 168h2v1h-2zM45 170h2v4h-2z" fill="#000"/></g></svg>
<span class="t" style="top:297px;transform:scaleX(0.8605);left:54.69px;transform-origin:0 0;">10-VAGO</span>
<span class="t" style="top:297px;transform:scaleX(0.8723);left:187.53px;transform-origin:0 0;">Ethernet</span>
<span class="t" style="top:297px;transform:scaleX(0.9200);right:892.03px;transform-origin:100% 0;">1500</span>
<span class="t" style="top:297px;transform:scaleX(0.9200);right:842.03px;transform-origin:100% 0;">1580</span>
<span class="t" style="top:297px;transform:scaleX(0.8630);right:722.54px;transform-origin:100% 0;">0 bps</span>
<span class="t" style="top:297px;transform:scaleX(0.8630);right:602.54px;transform-origin:100% 0;">0 bps</span>
<span class="t" style="top:297px;transform:scaleX(0.9550);right:502.04px;transform-origin:100% 0;">0</span>
<span class="t" style="top:297px;transform:scaleX(0.9550);right:402.04px;transform-origin:100% 0;">0</span>
<span class="t" style="top:297px;transform:scaleX(0.8630);right:282.54px;transform-origin:100% 0;">0 bps</span>
<span class="t" style="top:297px;transform:scaleX(0.8630);right:162.54px;transform-origin:100% 0;">0 bps</span>
<span class="t" style="top:297px;transform:scaleX(0.9550);right:62.04px;transform-origin:100% 0;">0</span>
<div style="left:8px;top:326px;width:1237px;height:1px;background:#e8e8e8;"></div>
<div style="left:35px;top:312px;width:1px;height:14px;background:#e8e8e8;"></div>
<div style="left:185px;top:312px;width:1px;height:14px;background:#e8e8e8;"></div>
<div style="left:305px;top:312px;width:1px;height:14px;background:#e8e8e8;"></div>
<div style="left:355px;top:312px;width:1px;height:14px;background:#e8e8e8;"></div>
<div style="left:405px;top:312px;width:1px;height:14px;background:#e8e8e8;"></div>
<div style="left:525px;top:312px;width:1px;height:14px;background:#e8e8e8;"></div>
<div style="left:645px;top:312px;width:1px;height:14px;background:#e8e8e8;"></div>
<div style="left:745px;top:312px;width:1px;height:14px;background:#e8e8e8;"></div>
<div style="left:845px;top:312px;width:1px;height:14px;background:#e8e8e8;"></div>
<div style="left:965px;top:312px;width:1px;height:14px;background:#e8e8e8;"></div>
<div style="left:1085px;top:312px;width:1px;height:14px;background:#e8e8e8;"></div>
<div style="left:1185px;top:312px;width:1px;height:14px;background:#e8e8e8;"></div>
<span class="t" style="top:312px;transform:scaleX(0.9123);left:10.09px;transform-origin:0 0;">R</span>
<svg style="left:39px;top:313px" width="15" height="12" viewBox="39 163 15 12"><g><path d="M39.3 168.5L42.6 165.2L43.9 166.5L41.9 168.5L43.9 170.5L42.6 171.8Z" fill="#ac1c3a" stroke="#4a0814" stroke-width="0.9"/><path d="M52.7 168.5L49.4 165.2L48.1 166.5L50.1 168.5L48.1 170.5L49.4 171.8Z" fill="#ac1c3a" stroke="#4a0814" stroke-width="0.9"/><path d="M45 163h2v4h-2zM45 168h2v1h-2zM45 170h2v4h-2z" fill="#000"/></g></svg>
<span class="t" style="top:312px;transform:scaleX(0.8918);left:54.66px;transform-origin:0 0;">11-MK-AUTH</span>
<span class="t" style="top:312px;transform:scaleX(0.8723);left:187.53px;transform-origin:0 0;">Ethernet</span>
<span class="t" style="top:312px;transform:scaleX(0.9200);right:892.03px;transform-origin:100% 0;">1500</span>
<span class="t" style="top:312px;transform:scaleX(0.9200);right:842.03px;transform-origin:100% 0;">1580</span>
<span class="t" style="top:312px;transform:scaleX(0.8940);right:722.53px;transform-origin:100% 0;">34.2 kbps</span>
<span class="t" style="top:312px;transform:scaleX(0.8940);right:602.53px;transform-origin:100% 0;">52.4 kbps</span>
<span class="t" style="top:312px;transform:scaleX(0.9200);right:501.95px;transform-origin:100% 0;">47</span>
<span class="t" style="top:312px;transform:scaleX(0.9200);right:402.07px;transform-origin:100% 0;">45</span>
<span class="t" style="top:312px;transform:scaleX(0.8940);right:282.53px;transform-origin:100% 0;">34.2 kbps</span>
<span class="t" style="top:312px;transform:scaleX(0.8940);right:162.53px;transform-origin:100% 0;">52.4 kbps</span>
<span class="t" style="top:312px;transform:scaleX(0.9200);right:61.95px;transform-origin:100% 0;">47</span>
<div style="left:8px;top:341px;width:1237px;height:1px;background:#e8e8e8;"></div>
<div style="left:35px;top:327px;width:1px;height:14px;background:#e8e8e8;"></div>
<div style="left:185px;top:327px;width:1px;height:14px;background:#e8e8e8;"></div>
<div style="left:305px;top:327px;width:1px;height:14px;background:#e8e8e8;"></div>
<div style="left:355px;top:327px;width:1px;height:14px;background:#e8e8e8;"></div>
<div style="left:405px;top:327px;width:1px;height:14px;background:#e8e8e8;"></div>
<div style="left:525px;top:327px;width:1px;height:14px;background:#e8e8e8;"></div>
<div style="left:645px;top:327px;width:1px;height:14px;background:#e8e8e8;"></div>
<div style="left:745px;top:327px;width:1px;height:14px;background:#e8e8e8;"></div>
<div style="left:845px;top:327px;width:1px;height:14px;background:#e8e8e8;"></div>
<div style="left:965px;top:327px;width:1px;height:14px;background:#e8e8e8;"></div>
<div style="left:1085px;top:327px;width:1px;height:14px;background:#e8e8e8;"></div>
<div style="left:1185px;top:327px;width:1px;height:14px;background:#e8e8e8;"></div>
<span class="t" style="top:327px;transform:scaleX(0.9123);left:10.09px;transform-origin:0 0;">R</span>
<svg style="left:39px;top:328px" width="15" height="12" viewBox="39 163 15 12"><g><path d="M39.3 168.5L42.6 165.2L43.9 166.5L41.9 168.5L43.9 170.5L42.6 171.8Z" fill="#ac1c3a" stroke="#4a0814" stroke-width="0.9"/><path d="M52.7 168.5L49.4 165.2L48.1 166.5L50.1 168.5L48.1 170.5L49.4 171.8Z" fill="#ac1c3a" stroke="#4a0814" stroke-width="0.9"/><path d="M45 163h2v4h-2zM45 168h2v1h-2zM45 170h2v4h-2z" fill="#000"/></g></svg>
<span class="t" style="top:327px;transform:scaleX(0.8673);left:54.69px;transform-origin:0 0;">12-RECANTO</span>
<span class="t" style="top:327px;transform:scaleX(0.8723);left:187.53px;transform-origin:0 0;">Ethernet</span>
<span class="t" style="top:327px;transform:scaleX(0.9200);right:892.03px;transform-origin:100% 0;">1500</span>
<span class="t" style="top:327px;transform:scaleX(0.9200);right:842.03px;transform-origin:100% 0;">1580</span>
<span class="t" style="top:327px;transform:scaleX(0.8940);right:722.54px;transform-origin:100% 0;">39.3 Mbps</span>
<span class="t" style="top:327px;transform:scaleX(0.8940);right:602.52px;transform-origin:100% 0;">4.2 Mbps</span>
<span class="t" style="top:327px;transform:scaleX(0.9200);right:502.01px;transform-origin:100% 0;">4 363</span>
<span class="t" style="top:327px;transform:scaleX(0.9200);right:401.96px;transform-origin:100% 0;">2 987</span>
<span class="t" style="top:327px;transform:scaleX(0.8940);right:282.54px;transform-origin:100% 0;">39.3 Mbps</span>
<span class="t" style="top:327px;transform:scaleX(0.8940);right:162.52px;transform-origin:100% 0;">4.2 Mbps</span>
<span class="t" style="top:327px;transform:scaleX(0.9200);right:62.01px;transform-origin:100% 0;">4 363</span>
<div style="left:8px;top:356px;width:1237px;height:1px;background:#e8e8e8;"></div>
<span class="t" style="top:342px;transform:scaleX(0.9841);left:23.70px;transform-origin:0 0;">;;;</span>
<span class="t" style="top:342px;transform:scaleX(0.9154);left:35.58px;transform-origin:0 0;">LINK</span>
<div style="left:8px;top:371px;width:1237px;height:1px;background:#e8e8e8;"></div>
<div style="left:35px;top:357px;width:1px;height:14px;background:#e8e8e8;"></div>
<div style="left:185px;top:357px;width:1px;height:14px;background:#e8e8e8;"></div>
<div style="left:305px;top:357px;width:1px;height:14px;background:#e8e8e8;"></div>
<div style="left:355px;top:357px;width:1px;height:14px;background:#e8e8e8;"></div>
<div style="left:405px;top:357px;width:1px;height:14px;background:#e8e8e8;"></div>
<div style="left:525px;top:357px;width:1px;height:14px;background:#e8e8e8;"></div>
<div style="left:645px;top:357px;width:1px;height:14px;background:#e8e8e8;"></div>
<div style="left:745px;top:357px;width:1px;height:14px;background:#e8e8e8;"></div>
<div style="left:845px;top:357px;width:1px;height:14px;background:#e8e8e8;"></div>
<div style="left:965px;top:357px;width:1px;height:14px;background:#e8e8e8;"></div>
<div style="left:1085px;top:357px;width:1px;height:14px;background:#e8e8e8;"></div>
<div style="left:1185px;top:357px;width:1px;height:14px;background:#e8e8e8;"></div>
<span class="t" style="top:357px;transform:scaleX(0.9123);left:10.09px;transform-origin:0 0;">R</span>
<svg style="left:39px;top:358px" width="15" height="12" viewBox="39 163 15 12"><g><path d="M39.3 168.5L42.6 165.2L43.9 166.5L41.9 168.5L43.9 170.5L42.6 171.8Z" fill="#ac1c3a" stroke="#4a0814" stroke-width="0.9"/><path d="M52.7 168.5L49.4 165.2L48.1 166.5L50.1 168.5L48.1 170.5L49.4 171.8Z" fill="#ac1c3a" stroke="#4a0814" stroke-width="0.9"/><path d="M45 163h2v4h-2zM45 168h2v1h-2zM45 170h2v4h-2z" fill="#000"/></g></svg>
<span class="t" style="top:357px;transform:scaleX(0.8769);left:53.92px;transform-origin:0 0;">LINK-FIBRA</span>
<span class="t" style="top:357px;transform:scaleX(0.8723);left:187.53px;transform-origin:0 0;">Ethernet</span>
<span class="t" style="top:357px;transform:scaleX(0.9200);right:892.03px;transform-origin:100% 0;">1500</span>
<span class="t" style="top:357px;transform:scaleX(0.9200);right:842.03px;transform-origin:100% 0;">1500</span>
<span class="t" style="top:357px;transform:scaleX(0.8940);right:722.54px;transform-origin:100% 0;">57.4 Mbps</span>
<span class="t" style="top:357px;transform:scaleX(0.8940);right:602.49px;transform-origin:100% 0;">225.3 Mbps</span>
<span class="t" style="top:357px;transform:scaleX(0.8880);right:501.99px;transform-origin:100% 0;">19 979</span>
<span class="t" style="top:357px;transform:scaleX(0.8880);right:402.04px;transform-origin:100% 0;">25 520</span>
<span class="t" style="top:357px;transform:scaleX(0.8940);right:282.54px;transform-origin:100% 0;">57.4 Mbps</span>
<span class="t" style="top:357px;transform:scaleX(0.8940);right:162.49px;transform-origin:100% 0;">225.3 Mbps</span>
<span class="t" style="top:357px;transform:scaleX(0.8880);right:61.99px;transform-origin:100% 0;">19 979</span>
<div style="left:8px;top:386px;width:1237px;height:1px;background:#e8e8e8;"></div>
<div style="left:35px;top:372px;width:1px;height:14px;background:#e8e8e8;"></div>
<div style="left:185px;top:372px;width:1px;height:14px;background:#e8e8e8;"></div>
<div style="left:305px;top:372px;width:1px;height:14px;background:#e8e8e8;"></div>
<div style="left:355px;top:372px;width:1px;height:14px;background:#e8e8e8;"></div>
<div style="left:405px;top:372px;width:1px;height:14px;background:#e8e8e8;"></div>
<div style="left:525px;top:372px;width:1px;height:14px;background:#e8e8e8;"></div>
<div style="left:645px;top:372px;width:1px;height:14px;background:#e8e8e8;"></div>
<div style="left:745px;top:372px;width:1px;height:14px;background:#e8e8e8;"></div>
<div style="left:845px;top:372px;width:1px;height:14px;background:#e8e8e8;"></div>
<div style="left:965px;top:372px;width:1px;height:14px;background:#e8e8e8;"></div>
<div style="left:1085px;top:372px;width:1px;height:14px;background:#e8e8e8;"></div>
<div style="left:1185px;top:372px;width:1px;height:14px;background:#e8e8e8;"></div>
<svg style="left:39px;top:373px" width="15" height="12" viewBox="39 163 15 12"><g><path d="M39.3 168.5L42.6 165.2L43.9 166.5L41.9 168.5L43.9 170.5L42.6 171.8Z" fill="#ac1c3a" stroke="#4a0814" stroke-width="0.9"/><path d="M52.7 168.5L49.4 165.2L48.1 166.5L50.1 168.5L48.1 170.5L49.4 171.8Z" fill="#ac1c3a" stroke="#4a0814" stroke-width="0.9"/><path d="M45 163h2v4h-2zM45 168h2v1h-2zM45 170h2v4h-2z" fill="#000"/></g></svg>
<span class="t" style="top:372px;transform:scaleX(0.9195);left:53.51px;transform-origin:0 0;">sfp2</span>
<span class="t" style="top:372px;transform:scaleX(0.8723);left:187.53px;transform-origin:0 0;">Ethernet</span>
<span class="t" style="top:372px;transform:scaleX(0.9200);right:892.03px;transform-origin:100% 0;">1500</span>
<span class="t" style="top:372px;transform:scaleX(0.9200);right:842.03px;transform-origin:100% 0;">1580</span>
<span class="t" style="top:372px;transform:scaleX(0.8630);right:722.54px;transform-origin:100% 0;">0 bps</span>
<span class="t" style="top:372px;transform:scaleX(0.8630);right:602.54px;transform-origin:100% 0;">0 bps</span>
<span class="t" style="top:372px;transform:scaleX(0.9550);right:502.04px;transform-origin:100% 0;">0</span>
<span class="t" style="top:372px;transform:scaleX(0.9550);right:402.04px;transform-origin:100% 0;">0</span>
<span class="t" style="top:372px;transform:scaleX(0.8630);right:282.54px;transform-origin:100% 0;">0 bps</span>
<span class="t" style="top:372px;transform:scaleX(0.8630);right:162.54px;transform-origin:100% 0;">0 bps</span>
<span class="t" style="top:372px;transform:scaleX(0.9550);right:62.04px;transform-origin:100% 0;">0</span>
<div style="left:8px;top:401px;width:1237px;height:1px;background:#e8e8e8;"></div>
<div style="left:35px;top:387px;width:1px;height:14px;background:#e8e8e8;"></div>
<div style="left:185px;top:387px;width:1px;height:14px;background:#e8e8e8;"></div>
<div style="left:305px;top:387px;width:1px;height:14px;background:#e8e8e8;"></div>
<div style="left:355px;top:387px;width:1px;height:14px;background:#e8e8e8;"></div>
<div style="left:405px;top:387px;width:1px;height:14px;background:#e8e8e8;"></div>
<div style="left:525px;top:387px;width:1px;height:14px;background:#e8e8e8;"></div>
<div style="left:645px;top:387px;width:1px;height:14px;background:#e8e8e8;"></div>
<div style="left:745px;top:387px;width:1px;height:14px;background:#e8e8e8;"></div>
<div style="left:845px;top:387px;width:1px;height:14px;background:#e8e8e8;"></div>
<div style="left:965px;top:387px;width:1px;height:14px;background:#e8e8e8;"></div>
<div style="left:1085px;top:387px;width:1px;height:14px;background:#e8e8e8;"></div>
<div style="left:1185px;top:387px;width:1px;height:14px;background:#e8e8e8;"></div>
<svg style="left:39px;top:388px" width="15" height="12" viewBox="39 163 15 12"><g><path d="M39.3 168.5L42.6 165.2L43.9 166.5L41.9 168.5L43.9 170.5L42.6 171.8Z" fill="#ac1c3a" stroke="#4a0814" stroke-width="0.9"/><path d="M52.7 168.5L49.4 165.2L48.1 166.5L50.1 168.5L48.1 170.5L49.4 171.8Z" fill="#ac1c3a" stroke="#4a0814" stroke-width="0.9"/><path d="M45 163h2v4h-2zM45 168h2v1h-2zM45 170h2v4h-2z" fill="#000"/></g></svg>
<span class="t" style="top:387px;transform:scaleX(0.9169);left:53.51px;transform-origin:0 0;">sfp3</span>
<span class="t" style="top:387px;transform:scaleX(0.8723);left:187.53px;transform-origin:0 0;">Ethernet</span>
<span class="t" style="top:387px;transform:scaleX(0.9200);right:892.03px;transform-origin:100% 0;">1500</span>
<span class="t" style="top:387px;transform:scaleX(0.9200);right:842.03px;transform-origin:100% 0;">1580</span>
<span class="t" style="top:387px;transform:scaleX(0.8630);right:722.54px;transform-origin:100% 0;">0 bps</span>
<span class="t" style="top:387px;transform:scaleX(0.8630);right:602.54px;transform-origin:100% 0;">0 bps</span>
<span class="t" style="top:387px;transform:scaleX(0.9550);right:502.04px;transform-origin:100% 0;">0</span>
<span class="t" style="top:387px;transform:scaleX(0.9550);right:402.04px;transform-origin:100% 0;">0</span>
<span class="t" style="top:387px;transform:scaleX(0.8630);right:282.54px;transform-origin:100% 0;">0 bps</span>
<span class="t" style="top:387px;transform:scaleX(0.8630);right:162.54px;transform-origin:100% 0;">0 bps</span>
<span class="t" style="top:387px;transform:scaleX(0.9550);right:62.04px;transform-origin:100% 0;">0</span>
<div style="left:8px;top:416px;width:1237px;height:1px;background:#e8e8e8;"></div>
<div style="left:35px;top:402px;width:1px;height:14px;background:#e8e8e8;"></div>
<div style="left:185px;top:402px;width:1px;height:14px;background:#e8e8e8;"></div>
<div style="left:305px;top:402px;width:1px;height:14px;background:#e8e8e8;"></div>
<div style="left:355px;top:402px;width:1px;height:14px;background:#e8e8e8;"></div>
<div style="left:405px;top:402px;width:1px;height:14px;background:#e8e8e8;"></div>
<div style="left:525px;top:402px;width:1px;height:14px;background:#e8e8e8;"></div>
<div style="left:645px;top:402px;width:1px;height:14px;background:#e8e8e8;"></div>
<div style="left:745px;top:402px;width:1px;height:14px;background:#e8e8e8;"></div>
<div style="left:845px;top:402px;width:1px;height:14px;background:#e8e8e8;"></div>
<div style="left:965px;top:402px;width:1px;height:14px;background:#e8e8e8;"></div>
<div style="left:1085px;top:402px;width:1px;height:14px;background:#e8e8e8;"></div>
<div style="left:1185px;top:402px;width:1px;height:14px;background:#e8e8e8;"></div>
<svg style="left:39px;top:403px" width="15" height="12" viewBox="39 163 15 12"><g><path d="M39.3 168.5L42.6 165.2L43.9 166.5L41.9 168.5L43.9 170.5L42.6 171.8Z" fill="#ac1c3a" stroke="#4a0814" stroke-width="0.9"/><path d="M52.7 168.5L49.4 165.2L48.1 166.5L50.1 168.5L48.1 170.5L49.4 171.8Z" fill="#ac1c3a" stroke="#4a0814" stroke-width="0.9"/><path d="M45 163h2v4h-2zM45 168h2v1h-2zM45 170h2v4h-2z" fill="#000"/></g></svg>
<span class="t" style="top:402px;transform:scaleX(0.9091);left:53.52px;transform-origin:0 0;">sfp4</span>
<span class="t" style="top:402px;transform:scaleX(0.8723);left:187.53px;transform-origin:0 0;">Ethernet</span>
<span class="t" style="top:402px;transform:scaleX(0.9200);right:892.03px;transform-origin:100% 0;">1500</span>
<span class="t" style="top:402px;transform:scaleX(0.9200);right:842.03px;transform-origin:100% 0;">1580</span>
<span class="t" style="top:402px;transform:scaleX(0.8630);right:722.54px;transform-origin:100% 0;">0 bps</span>
<span class="t" style="top:402px;transform:scaleX(0.8630);right:602.54px;transform-origin:100% 0;">0 bps</span>
<span class="t" style="top:402px;transform:scaleX(0.9550);right:502.04px;transform-origin:100% 0;">0</span>
<span class="t" style="top:402px;transform:scaleX(0.9550);right:402.04px;transform-origin:100% 0;">0</span>
<span class="t" style="top:402px;transform:scaleX(0.8630);right:282.54px;transform-origin:100% 0;">0 bps</span>
<span class="t" style="top:402px;transform:scaleX(0.8630);right:162.54px;transform-origin:100% 0;">0 bps</span>
<span class="t" style="top:402px;transform:scaleX(0.9550);right:62.04px;transform-origin:100% 0;">0</span>
<div style="left:8px;top:569px;width:1237px;height:1px;background:#8e8e8e;"></div>
<div style="left:8px;top:570px;width:1237px;height:15px;background:#f0f0f0;"></div>
<div style="left:8px;top:570px;width:1000px;height:1px;background:#fcfcfc;"></div>
<div style="left:8px;top:585px;width:1237px;height:1px;background:#8e8e8e;"></div>
<div style="left:23px;top:570px;width:1px;height:15px;background:#fdfdfd;"></div>
<div style="left:24px;top:570px;width:1px;height:15px;background:#e2e2e2;"></div>
<svg style="left:12px;top:573px" width="9" height="10" viewBox="12 573 9 10"><path d="M13 578L17 574V576H19.2V580H17V582Z" fill="#000"/></svg>
<div style="left:1008px;top:570px;width:235px;height:15px;background:#d9d9d9;box-sizing:border-box;border-left:1px solid #8a8a8a;border-right:1px solid #8e8e8e;"></div>
<div style="left:1243px;top:570px;width:1px;height:15px;background:#fff;"></div>
<div style="left:7px;top:570px;width:1px;height:36px;background:#989898;"></div>
<div style="left:7px;top:606px;width:1238px;height:1px;background:#989898;"></div>
<span class="t" style="top:588.3px;transform:scaleX(0.8862);left:10.17px;transform-origin:0 0;">16 items out of 409 (1 selected)</span>
</div></body></html>
